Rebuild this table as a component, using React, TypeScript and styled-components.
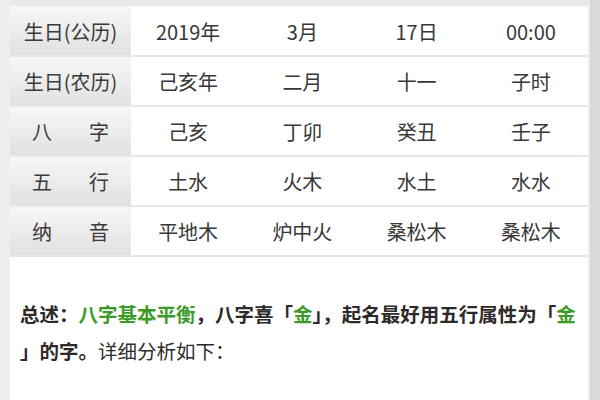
import React from "react";
import styled, { createGlobalStyle } from "styled-components";

const Global = createGlobalStyle`
  html, body { margin: 0; padding: 0; }
  body {
    background: #f3eff1;
    font-family: "Noto Sans CJK SC", "Noto Sans", sans-serif;
    color: #333;
  }
`;

const Page = styled.div`
  display: flex;
  width: 600px;
  height: 400px;
  overflow: hidden;
`;

const Gutter = styled.div`
  width: 8px;
  background: #f2edef;
  border-right: 2px solid #e9eff2;
`;

const Panel = styled.div`
  flex: 1;
  background: #fff;
  display: flex;
  flex-direction: column;
`;

const ScrollBar = styled.div`
  width: 10px;
  background: #d9d9d9;
  border-left: 2px solid #ececec;
`;

const TopStrip = styled.div`
  height: 6px;
  background: #e9e9ea;
  border-bottom: 1px solid #f4f6f8;
`;

const Row = styled.div`
  display: grid;
  grid-template-columns: 121px repeat(4, 1fr);
  height: 48px;
  border-bottom: 2px solid #e4e8ec;
`;

const Label = styled.div<{ $spread?: boolean }>`
  display: flex;
  align-items: center;
  justify-content: ${(p) => (p.$spread ? "space-between" : "center")};
  padding: ${(p) => (p.$spread ? "0 22px" : "0")};
  background: linear-gradient(#f7f7f7, #e2e1e2);
  font-size: 20px;
  color: #3a3a3a;
`;

const Cell = styled.div`
  display: flex;
  align-items: center;
  justify-content: center;
  font-size: 20px;
  color: #383838;
`;

const Summary = styled.div`
  padding: 38px 0 0 10px;
  font-size: 19.5px;
  line-height: 37px;
  color: #2e2a2a;
  white-space: nowrap;
`;

const Strong = styled.span`
  font-weight: 700;
`;

const Green = styled.span`
  font-weight: 700;
  color: #3c9a28;
`;

const rows: { label: string; spread?: boolean; cells: string[] }[] = [
  { label: "生日(公历)", cells: ["2019年", "3月", "17日", "00:00"] },
  { label: "生日(农历)", cells: ["己亥年", "二月", "十一", "子时"] },
  { label: "八字", spread: true, cells: ["己亥", "丁卯", "癸丑", "壬子"] },
  { label: "五行", spread: true, cells: ["土水", "火木", "水土", "水水"] },
  { label: "纳音", spread: true, cells: ["平地木", "炉中火", "桑松木", "桑松木"] },
];

export default function App() {
  return (
    <Page>
      <Global />
      <Gutter />
      <Panel>
        <TopStrip />
        {rows.map((r) => (
          <Row key={r.label}>
            <Label $spread={r.spread}>
              {r.spread ? (
                <>
                  <span>{r.label[0]}</span>
                  <span>{r.label[1]}</span>
                </>
              ) : (
                r.label
              )}
            </Label>
            {r.cells.map((c, i) => (
              <Cell key={i}>{c}</Cell>
            ))}
          </Row>
        ))}
        <Summary>
          <Strong>总述：</Strong>
          <Green>八字基本平衡</Green>
          <Strong>，八字喜「</Strong>
          <Green>金</Green>
          <Strong>」，起名最好用五行属性为「</Strong>
          <Green>金</Green>
          <br />
          <Strong>」的字。</Strong>
          详细分析如下：
        </Summary>
      </Panel>
      <ScrollBar />
    </Page>
  );
}
